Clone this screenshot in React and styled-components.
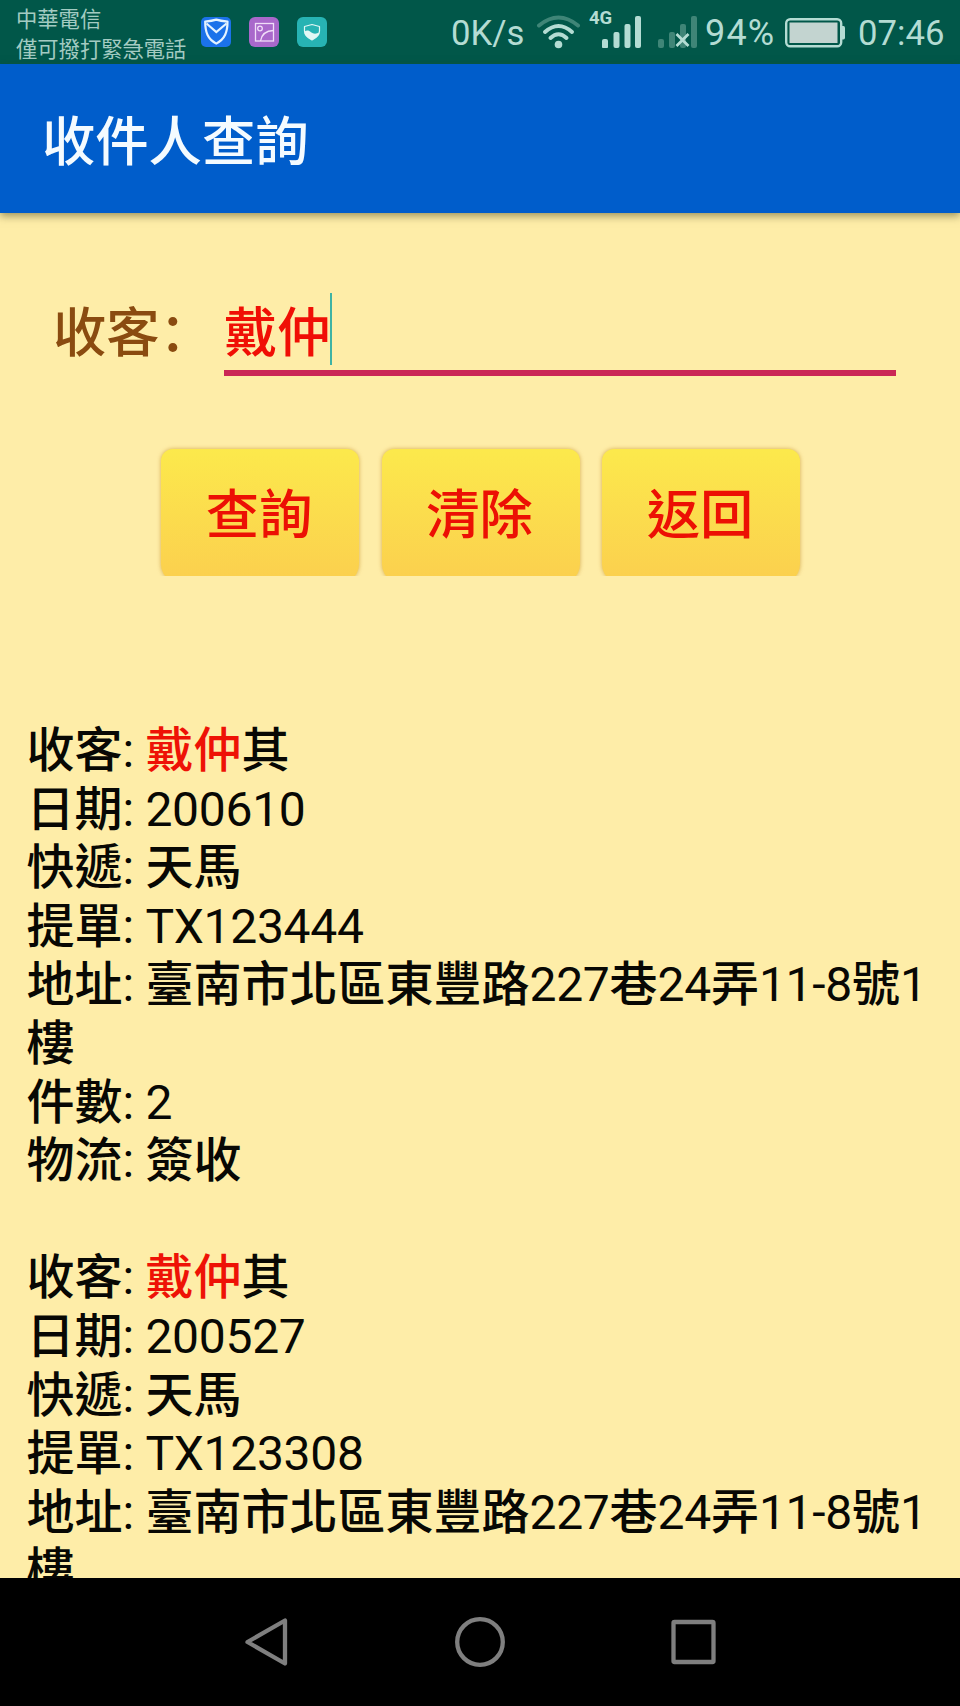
import React from "react";
import styled, { createGlobalStyle } from "styled-components";

const GlobalStyle = createGlobalStyle`
  * { box-sizing: border-box; }
  body { margin: 0; background: #000; }
  button, input { font: inherit; }
`;

const Screen = styled.div`
  width: 960px;
  height: 1706px;
  display: flex;
  flex-direction: column;
  overflow: hidden;
  background: #feeda8;
  font-family: Roboto, "Noto Sans CJK TC", sans-serif;
`;

const StatusBar = styled.header`
  flex: none;
  height: 64px;
  display: flex;
  align-items: center;
  padding: 0 16px;
  background: #015749;
  color: #b4dcd3;
`;

const Carrier = styled.div`
  width: 185px;
  font-size: 21.3px;
  line-height: 30px;
  white-space: nowrap;
  color: #a3cbc2;
  padding-top: 5px;
`;

const Notifications = styled.div`
  display: flex;
  gap: 18px;
  flex: 1;
`;

const Indicators = styled.div`
  display: flex;
  align-items: center;
  height: 64px;
  font-size: 34.7px;
  line-height: 64px;
  white-space: nowrap;
`;

const StatusText = styled.span`
  width: ${(p) => p.$width}px;
  padding-top: 2px;
  font-size: ${(p) => p.$size || 34.7}px;
  letter-spacing: ${(p) => p.$tracking || 0}px;
`;

const StatusSvg = styled.svg`
  display: block;
  flex: none;
  margin-right: ${(p) => p.$after || 0}px;
  margin-top: ${(p) => p.$top || 0}px;
`;

const AppBar = styled.div`
  flex: none;
  position: relative;
  height: 149px;
  display: flex;
  align-items: center;
  padding: 8px 42px 0;
  background: #005dcb;
  box-shadow: 0 3px 8px rgba(60, 60, 20, 0.5);
`;

const Title = styled.h1`
  margin: 0;
  font-size: 53.3px;
  line-height: 64px;
  font-weight: 500;
  color: #f4fbff;
`;

const Form = styled.section`
  flex: none;
  padding: 79px 64px 0 53px;
`;

const Field = styled.div`
  display: flex;
  font-size: 53.3px;
  line-height: 84px;
`;

const Label = styled.label`
  width: 171px;
  font-weight: 500;
  white-space: nowrap;
  color: #8a4b10;
  font-family: Roboto, "Noto Sans CJK SC", sans-serif;
`;

const Entry = styled.div`
  flex: 1;
  display: flex;
  align-items: flex-start;
  height: 84px;
  border-bottom: 6px solid #cb2756;
  font-weight: 500;
  color: #f00f05;
`;

const Caret = styled.span`
  width: 2.5px;
  height: 72px;
  margin: 1px 0 0 -1px;
  background: #3fb3a4;
`;

const Actions = styled.div`
  display: flex;
  gap: 12.5px;
  height: 143px;
  margin: 57px 0 0 102px;
  padding: 11px 0 0 1px;
  overflow: hidden;
`;

const ActionButton = styled.button`
  width: 208px;
  height: 134px;
  margin: 0;
  border: 5px solid transparent;
  border-bottom: 0;
  padding: 0 2px 6px 0;
  border-radius: 17px 17px 14px 14px;
  background: linear-gradient(#fce94c, #fbd04e) padding-box;
  filter: drop-shadow(0 0 2px rgba(200, 150, 50, 0.75));
  font-size: 53.3px;
  font-weight: 500;
  color: #ec1004;
`;

const Results = styled.main`
  flex: 1;
  min-height: 0;
  overflow: hidden;
  padding: 146px 27px 0 26.5px;
  font-size: 48px;
  line-height: 58.6px;
  letter-spacing: -0.3px;
  color: #080804;
`;

const Parcel = styled.article`
  margin-bottom: 58.6px;
`;

const Line = styled.div`
  min-height: 58.6px;
`;

const Cjk = styled.span`
  font-weight: 500;
  letter-spacing: 0;
  color: ${(p) => (p.$match ? "#ee1206" : "inherit")};
`;

const NavBar = styled.nav`
  flex: none;
  height: 128px;
  display: flex;
  align-items: center;
  justify-content: center;
  gap: 163px;
  background: #000;
`;

const NavIcon = styled.svg`
  display: block;
  width: 50px;
  height: 50px;
  fill: none;
  stroke: #7f7f7f;
  stroke-width: 4.3;
  stroke-linejoin: round;
`;

const parcels = [
  { date: "200610", bill: "TX123444", count: "2", state: "簽收" },
  { date: "200527", bill: "TX123308" },
];

// Ideographs are set in medium weight, Latin text and digits in regular.
const mixed = (text) =>
  text
    .split(/([\u3400-\u9fff]+)/)
    .filter(Boolean)
    .map((part, i) => (/[\u3400-\u9fff]/.test(part) ? <Cjk key={i}>{part}</Cjk> : part));

function ParcelEntry({ date, bill, count, state }) {
  return (
    <Parcel>
      <Line>
        {mixed("收客: ")}
        <Cjk $match>戴仲</Cjk>
        <Cjk>其</Cjk>
      </Line>
      <Line>{mixed(`日期: ${date}`)}</Line>
      <Line>{mixed("快遞: 天馬")}</Line>
      <Line>{mixed(`提單: ${bill}`)}</Line>
      <Line>{mixed("地址: 臺南市北區東豐路227巷24弄11-8號1樓")}</Line>
      {count && <Line>{mixed(`件數: ${count}`)}</Line>}
      {state && <Line>{mixed(`物流: ${state}`)}</Line>}
    </Parcel>
  );
}

function Status() {
  return (
    <StatusBar>
      <Carrier>
        中華電信
        <br />
        僅可撥打緊急電話
      </Carrier>
      <Notifications>
        <StatusSvg width="30" height="30" viewBox="0 0 30 30">
          <rect width="30" height="30" rx="5" fill="#1b72ea" />
          <path
            d="M15.3 2.6C12 3.6 8 4.2 4.2 4.6C4.2 15 6.5 22 15.3 26.6C24 22 26.5 15 26.5 4.6C22.5 4.2 18.5 3.6 15.3 2.6Z"
            fill="none"
            stroke="#e4f3ff"
            strokeWidth="2.2"
            strokeLinejoin="round"
          />
          <path d="M5.5 6.5L15.3 15L25.5 6.5" fill="none" stroke="#e4f3ff" strokeWidth="2.2" />
        </StatusSvg>
        <StatusSvg width="30" height="30" viewBox="0 0 30 30">
          <rect width="30" height="30" rx="6" fill="#a968cb" />
          <g fill="none" stroke="#f0ddf8" strokeWidth="1.3">
            <rect x="6.5" y="6.5" width="18" height="17.5" />
            <circle cx="11" cy="11.5" r="2.3" />
            <path d="M11.5 24C12.5 18 17 13.7 24.5 13.5" />
          </g>
        </StatusSvg>
        <StatusSvg width="30" height="30" viewBox="0 0 30 30">
          <rect width="30" height="30" rx="6" fill="#27b3b3" />
          <path
            d="M15 7.5L22.5 9.5V14C22.5 18.5 19 21 15 23C11 21 7.5 18.5 7.5 14V9.5Z"
            fill="none"
            stroke="#e2f8f5"
            strokeWidth="1.2"
            strokeLinejoin="round"
          />
          <path
            d="M7.5 14.5C10 13 12 13.5 14 15.3C16.5 17.2 19.5 17 22.3 15.5C21.5 19 18.5 21.3 15 23C11 21 7.5 18.5 7.5 14.5Z"
            fill="#e2f8f5"
          />
        </StatusSvg>
      </Notifications>
      <Indicators>
        <StatusText $width={85}>0K/s</StatusText>
        <StatusSvg width="46" height="34" viewBox="0 0 46 34" $after={7}>
          <g fill="none" strokeWidth="4" strokeLinecap="round">
            <path d="M3 10.5Q22.5 -5.5 42 10.5" stroke="#3f8577" />
            <path d="M9 17Q22.5 5 36 17" stroke="#b4dcd3" />
            <path d="M14.5 23Q22.5 15.5 30.5 23" stroke="#b4dcd3" />
          </g>
          <circle cx="22.5" cy="29.5" r="3.8" fill="#b4dcd3" />
        </StatusSvg>
        <StatusSvg width="54" height="40" viewBox="0 0 54 40" $after={14} $top={-8}>
          <text x="0" y="16" fill="#b4dcd3" fontFamily="Roboto, sans-serif" fontSize="18.5" fontWeight="700">
            4G
          </text>
          <g fill="#b4dcd3">
            <rect x="13" y="31" width="6" height="9.5" rx="2" />
            <rect x="24.5" y="24" width="6" height="16" rx="2" />
            <rect x="35.5" y="16" width="6" height="24" rx="2" />
            <rect x="46" y="8" width="6" height="32" rx="2" />
          </g>
        </StatusSvg>
        <StatusSvg width="40" height="40" viewBox="0 0 40 40" $after={8} $top={-8}>
          <g fill="#3f8577">
            <rect x="1" y="31" width="6" height="9" rx="2" />
            <rect x="12" y="24" width="6" height="16" rx="2" />
            <rect x="23" y="16" width="6" height="24" rx="2" />
            <rect x="34" y="8" width="6" height="32" rx="2" />
          </g>
          <path d="M19.5 26L31.5 38M31.5 26L19.5 38" stroke="#b4dcd3" strokeWidth="2.8" />
        </StatusSvg>
        <StatusText $width={80} $size={36} $tracking={1.2}>
          94%
        </StatusText>
        <StatusSvg width="61" height="30" viewBox="0 0 61 30" $after={12} $top={2}>
          <rect x="1.2" y="1.2" width="55" height="27" rx="4" fill="none" stroke="#b4dcd3" strokeWidth="2.4" />
          <rect x="4.5" y="4.5" width="48" height="20.5" fill="#c3d4d0" />
          <path d="M57 8H58.5Q60 8 60 10V19.5Q60 21.5 58.5 21.5H57Z" fill="#b4dcd3" />
        </StatusSvg>
        <StatusText $width={86}>07:46</StatusText>
      </Indicators>
    </StatusBar>
  );
}

export default function App() {
  return (
    <>
      <GlobalStyle />
      <Screen lang="zh-Hant">
        <Status />
        <AppBar>
          <Title>收件人查詢</Title>
        </AppBar>
        <Form>
          <Field>
            <Label lang="zh-Hans">收客：</Label>
            <Entry>
              戴仲
              <Caret />
            </Entry>
          </Field>
          <Actions>
            <ActionButton>查詢</ActionButton>
            <ActionButton>清除</ActionButton>
            <ActionButton>返回</ActionButton>
          </Actions>
        </Form>
        <Results>
          {parcels.map((parcel) => (
            <ParcelEntry key={parcel.bill} {...parcel} />
          ))}
        </Results>
        <NavBar>
          <NavIcon viewBox="0 0 50 50">
            <path d="M5.5 25L43 3.5V46.5Z" />
          </NavIcon>
          <NavIcon viewBox="0 0 50 50">
            <circle cx="25" cy="25" r="22.8" />
          </NavIcon>
          <NavIcon viewBox="0 0 50 50">
            <rect x="5.5" y="5" width="40" height="40" rx="1" />
          </NavIcon>
        </NavBar>
      </Screen>
    </>
  );
}
